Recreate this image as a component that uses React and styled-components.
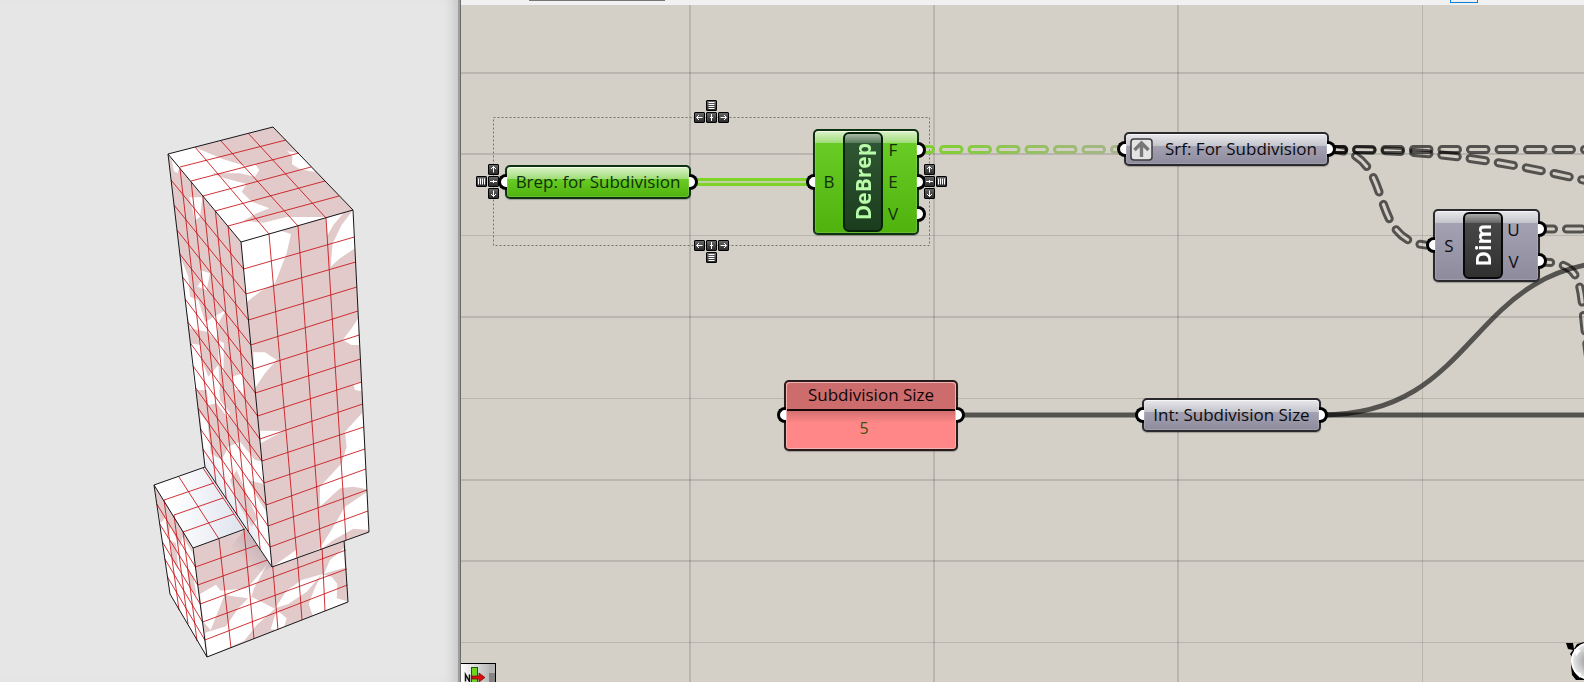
import React from "react";
import styled, { createGlobalStyle, css } from "styled-components";

const GlobalStyle = createGlobalStyle`
  * { box-sizing: border-box; }
  body { margin: 0; overflow: hidden; }
`;

const Page = styled.main`
  display: flex;
  min-height: 100vh;
  font-family: "Open Sans", "Noto Sans", sans-serif;
  background: #e6e6e6;
`;

const Viewport = styled.section`
  flex: 0 0 461px;
  border-right: 1px solid #6b6b6b;
  box-shadow: inset -2px 0 0 #9d9d9d, inset -14px 0 12px -8px #c4c4c4;
  background: #e6e6e6;
`;

const Model = styled.svg`
  display: block;
  width: 458px;
`;

const Editor = styled.section`
  flex: 1;
  min-width: 0;
  display: flex;
  flex-direction: column;
`;

const Toolbar = styled.div`
  height: 5px;
  display: flex;
  align-items: flex-start;
  justify-content: space-between;
  padding: 0 106px 0 68px;
  background: #f1f1f2;
`;

const ToolbarField = styled.div`
  width: 136px;
  height: 1px;
  background: #777;
`;

const ToolbarToggle = styled.div`
  width: 28px;
  height: 3px;
  border: 1px solid #0a7ddb;
  border-top: 0;
`;

const Canvas = styled.div`
  position: relative;
  flex: 1;
  overflow: hidden;
  background: #d4d0c8;
`;

const Drawing = styled.svg`
  position: absolute;
  inset: 0;
  width: 100%;
  height: 100%;
`;

const skins = {
  green: css`
    color: #10300a;
    border-color: #0e3210;
    background: linear-gradient(#dcf3ca, #a0dc78 12px, #69cc25 12px, #50b20d) padding-box;
  `,
  gray: css`
    color: #0c0c10;
    border-color: #2a2a2e;
    background: linear-gradient(#e8e8ec, #c4c4cc 12px, #a4a2b2 12px, #8e8c9c) padding-box;
  `,
};

const Node = styled.article`
  position: absolute;
  left: ${(p) => p.$x}px;
  top: ${(p) => p.$y}px;
  width: ${(p) => p.$w}px;
  height: ${(p) => p.$h}px;
  display: flex;
  align-items: center;
  justify-content: ${(p) => (p.$start ? "flex-start" : "center")};
  padding-left: ${(p) => (p.$start ? 4 : 0)}px;
  border: 2px solid;
  border-radius: 5px;
  font-size: 17px;
  line-height: 24px;
  white-space: nowrap;
  ${(p) => skins[p.$skin]}
  box-shadow: inset 0 1px 0 rgba(255, 255, 255, 0.6), inset 0 0 0 1px rgba(255, 255, 255, 0.15),
    0 1px 1px rgba(0, 0, 0, 0.25);
`;

const Port = styled.span`
  position: absolute;
  ${(p) => (p.$side === "left" ? "right: 100%" : "left: 100%")};
  top: ${(p) => p.$y - 10}px;
  width: 9px;
  height: 16px;
  border: 3px solid #000;
  background: #fff;
  ${(p) =>
    p.$side === "left"
      ? "border-right: 0; border-radius: 8px 0 0 8px;"
      : "border-left: 0; border-radius: 0 8px 8px 0;"}
`;

const PortColumn = styled.div`
  flex: ${(p) => (p.$side === "right" ? "1" : "0 0 28px")};
  align-self: stretch;
  display: flex;
  flex-direction: column;
  justify-content: center;
  gap: 8px;
  padding-right: ${(p) => (p.$side === "right" ? 14 : 0)}px;
  text-align: center;
`;

const Nameplate = styled.div`
  width: 40px;
  align-self: stretch;
  margin: 1px 0;
  display: flex;
  align-items: center;
  justify-content: center;
  border: 2px solid ${(p) => (p.$green ? "#06210a" : "#08080a")};
  border-radius: 6px;
  color: ${(p) => (p.$green ? "#b8fba8" : "#fff")};
  background: ${(p) =>
    p.$green
      ? "linear-gradient(#a9b9a4, #55785a 9px, #2f5633 9px, #1b3d1d)"
      : "linear-gradient(#aaa, #666 9px, #484848 9px, #303030)"};
`;

const PlateText = styled.span`
  writing-mode: vertical-rl;
  transform: rotate(180deg);
  font-size: 21px;
  font-weight: 700;
  line-height: 30px;
`;

const GraftIcon = styled.svg`
  flex: none;
  width: 23px;
  height: 23px;
  margin-right: 12px;
`;

const Panel = styled.article`
  position: absolute;
  left: 323px;
  top: 375px;
  width: 174px;
  height: 71px;
  display: flex;
  flex-direction: column;
  text-align: center;
  border: 2px solid #2a1a1a;
  border-radius: 5px;
  background: #ff8787;
  font-size: 17px;
  line-height: 24px;
  box-shadow: inset 0 0 0 1px #f0b4b4, 0 1px 1px rgba(0, 0, 0, 0.25);
`;

const PanelTitle = styled.h2`
  margin: 1px 1px 0;
  height: 28px;
  font: inherit;
  color: #100606;
  border-bottom: 2px solid #140808;
  border-radius: 4px 4px 0 0;
  background: #cd6c6c;
`;

const PanelValue = styled.div`
  margin: 0 1px 1px;
  flex: 1;
  padding: 5px 14px 0 0;
  color: #3b5212;
  font-size: 16px;
  background: linear-gradient(#d47070, #ff8787 12px);
  border-radius: 0 0 4px 4px;
`;

const AlignButton = styled.button`
  position: absolute;
  left: ${(p) => p.$x}px;
  top: ${(p) => p.$y}px;
  width: 11px;
  height: 11px;
  padding: 0;
  border: 1px solid #000;
  border-radius: 1px;
  background: linear-gradient(#666, #2b2b2b);
  svg { display: block; width: 9px; height: 9px; }
`;

const SolverBadge = styled.svg`
  position: absolute;
  left: 0;
  bottom: 0;
  width: 35px;
  height: 19px;
`;

const Compass = styled.svg`
  position: absolute;
  right: 0;
  bottom: 0;
  width: 20px;
  height: 40px;
`;

/* Linear blend between two points. */
const mix = (a, b, t) => [a[0] + (b[0] - a[0]) * t, a[1] + (b[1] - a[1]) * t];
const pts = (list) => list.map((p) => p.join(",")).join(" ");
const atY = (a, b, y) => mix(a, b, (y - a[1]) / (b[1] - a[1]));

const A = [168, 154], B = [273, 127], C = [353, 210], D = [241, 242];
const E = [205, 467], F = [272, 567], G = [369, 532];
const P = [154, 485], Q = [193, 548], R = [207, 657], S = [170, 594];
const T = [344, 495], U = [348, 602], V = [245, 529];

const rightRows = [
  [269, 237], [294, 262], [320, 287], [345, 311], [369, 335], [393, 359], [416, 382],
  [439, 404], [461, 427], [483, 449], [505, 469], [526, 490], [547, 511],
].map(([l, r]) => [atY(D, F, l), atY(C, G, r)]);
const leftYs = [180, 205, 230, 254, 277, 299, 322, 343, 366, 388, 408, 429, 449];
const leftRows = leftYs.map((y, i) => [atY(A, E, y), rightRows[i][0]]);
const leftCols = [0.164, 0.318, 0.477, 0.649, 0.823].map((t) => [mix(A, D, t), mix(E, F, t)]);
const rightCols = [
  [[269, 234], [297, 558]], [[298, 226], [321, 549]], [[326, 218], [346, 540]],
];
const roofLines = [
  [[195, 147], [269, 234]], [[221, 141], [298, 226]], [[248, 133], [326, 218]],
  [[180, 167], [286, 140]], [[191, 181], [299, 153]], [[203, 196], [311, 167]],
  [[215, 211], [325, 181]], [[228, 226], [339, 196]],
];
const baseLines = [
  ...[[504, 567], [524, 585], [542, 604], [559, 622], [577, 640]].map(([l, r]) => [atY(P, S, l), atY(Q, R, r)]),
  [[164, 500], [179, 610]], [[174, 515], [188, 624]], [[183, 532], [197, 641]],
  ...[[567, 514], [585, 532], [604, 550], [622, 569], [640, 585]].map(([l, r]) => [atY(Q, R, l), atY(T, U, r)]),
  [[219, 539], [231, 648]], [[244, 530], [254, 639]], [[269, 521], [278, 630]],
  [[294, 512], [302, 620]], [[320, 503], [325, 611]],
  [[179, 477], [219, 539]], [[164, 500], [214, 483]], [[174, 515], [223, 498]],
  [[183, 532], [234, 514]], [[203, 468], [244, 529]],
];

const Lines = ({ list }) => (
  <path
    d={list.map(([a, b]) => `M${a.join(" ")}L${b.join(" ")}`).join("")}
    stroke="#c80f14"
    strokeWidth=".85"
    fill="none"
  />
);

const PINK = "#e3caca";

function Building() {
  return (
    <Model viewBox="0 0 458 682" role="img" aria-label="Subdivided tower model">
      <defs>
        <linearGradient id="terrace" x1="0" y1="0" x2="1" y2="0">
          <stop offset=".2" stopColor="#fff" />
          <stop offset="1" stopColor="#dde2ec" />
        </linearGradient>
        <linearGradient id="contact" x1="210" y1="495" x2="236" y2="478" gradientUnits="userSpaceOnUse">
          <stop offset="0" stopColor="#ccd6e6" stopOpacity=".8" />
          <stop offset="1" stopColor="#ccd6e6" stopOpacity="0" />
        </linearGradient>
        <linearGradient id="under" x1="240" y1="560" x2="262" y2="538" gradientUnits="userSpaceOnUse">
          <stop offset="0" stopColor="#a99aa6" stopOpacity="0" />
          <stop offset="1" stopColor="#a99aa6" stopOpacity=".6" />
        </linearGradient>
      </defs>
      <polygon points={pts([P, Q, R, S])} fill="#fff" />
      <polygon points={pts([Q, T, U, R])} fill={PINK} />
      <polygon points={pts([P, E, V, Q])} fill="url(#terrace)" />
      <g transform="translate(140 380) scale(.33333)">
        <path fill={PINK} d="M43 317L128 450L155 500L158 520L128 470L120 500L92 440L82 480L78 410L62 430Z M90 480L108 490L115 570L98 540Z M140 560L160 590L170 650L150 620Z" />
        <path
          fill="#fff"
          d="M180 642L228 614L242 632L320 625L345 598L382 552L342 625L334 650L405 686L350 735L313 782L202 831L196 758L214 752L258 738L292 688L325 655L278 650L254 645L232 700L212 750L190 725Z
             M392 748L410 690L440 715L432 742L415 750Z
             M405 685L440 632L485 600L545 583L500 635L445 672Z
             M545 583L575 590L592 612L590 655L623 664L553 693L518 706L506 672L522 630Z
             M612 505L615 563L570 575L552 582L570 540Z"
        />
        <path fill={PINK} d="M254 645L320 655L292 688L258 738L214 752L236 700Z" />
      </g>
      <polygon points={pts([V, F, [262, 572], [230, 548]])} fill="url(#under)" />
      <Lines list={baseLines} />
      <path d={`M${E}L${P}L${Q}L${V}M${P}L${S}L${R}L${Q}M${R}L${U}L344 540`} stroke="#16161a" fill="none" />

      <polygon points={pts([A, B, C, G, F, E])} fill={PINK} />
      <g transform="translate(140 110) scale(.33333)" fill="#fff">
        <path d="M83 133L164 112L250 148L325 170L345 163L358 180L345 200L300 190L215 190L255 205L320 222L305 245L335 275L388 295L350 310L310 332L370 338L440 321L560 321L472 348L388 372L303 396Z M441 123L477 130L525 186L480 178L456 163L457 138Z" />
        <path d="M95 150L119 172L112 190L102 183Z M148 262L187 262L180 320L165 332L158 300Z M180 480L210 490L200 540L172 530L185 510Z M125 450L145 500L150 560L175 570L195 635L258 600L235 640L230 690L200 665L150 655L140 600Z M150 700L180 705L185 750L205 800L235 765L240 840L163 840Z M235 690L252 700L250 790L236 760Z M275 800L310 790L310 840L285 840Z" />
        <path d="M303 396L388 372L425 363L453 372L440 430L405 520L360 545L318 578Z M558 325L610 310L580 345L563 375Z M639 300L645 415L600 445L572 470L578 400L605 345Z M655 625L657 705L635 705L608 690L635 655Z M340 727L375 727L410 750L375 790L345 835Z M645 825L663 815L663 840L645 840Z" />
      </g>
      <g transform="translate(140 380) scale(.33333)" fill="#fff">
        <path d="M640 12L663 5L663 33L645 30Z M667 98L682 328L640 320L600 325L540 380L540 320L605 250L620 200L615 155Z M682 335L687 450L640 446L580 480L540 510L397 561L468 510L475 535L540 505L580 440L615 380Z M360 152L430 153L362 190Z" />
        <path d="M200 20L235 0L240 60L270 100L262 112L230 70L205 75Z M280 0L310 0L310 45Z M180 100L203 130L212 220L245 240L265 200L300 185L345 240L368 245L395 561L196 262Z" />
        <path fill={PINK} d="M270 300L290 270L322 345L352 415L335 440L300 380Z M325 300L373 312L382 400L350 350Z" />
      </g>
      <polygon points={pts([E, [208, 440], [262, 535], [255, 542]])} fill="url(#contact)" />
      <Lines list={[...rightRows, ...rightCols, ...leftRows, ...leftCols, ...roofLines]} />
      <path d={`M${A}L${B}L${C}L${D}ZM${A}L${E}L${F}L${G}L${C}M${D}L${F}`} stroke="#16161a" fill="none" />
    </Model>
  );
}

/* Wire drawn as a chain of hollow capsules. */
function ChainWire({ id, d, offset = 0, paint = "#000", opacity = 0.6 }) {
  const dash = { d, fill: "none", strokeLinecap: "round", strokeDasharray: "15.5 13", strokeDashoffset: offset };
  return (
    <>
      <mask id={id} maskUnits="userSpaceOnUse" x="0" y="0" width="1700" height="800">
        <path {...dash} stroke="#fff" strokeWidth="9" />
        <path {...dash} stroke="#000" strokeWidth="3" />
      </mask>
      <rect x="0" y="0" width="1700" height="800" fill={paint} opacity={opacity} mask={`url(#${id})`} />
    </>
  );
}

const gridX = [[690, 2], [934, 2], [1178, 2], [1422.5, 1]];
const gridY = [[73, 2], [154, 2], [235.5, 1], [317, 2], [398.5, 1], [480, 2], [561, 2], [642.5, 1]];

function Wires() {
  return (
    <Drawing aria-hidden="true">
      <defs>
        <linearGradient id="fade" gradientUnits="userSpaceOnUse" x1="926" y1="0" x2="1124" y2="0">
          <stop offset="0" stopColor="#7ed02e" />
          <stop offset="1" stopColor="#a9b48e" />
        </linearGradient>
      </defs>
      <g transform="translate(-461 -5)">
        {gridX.map(([x, w]) => <path key={x} d={`M${x} 0V2000`} stroke="#000" strokeOpacity=".12" strokeWidth={w} />)}
        {gridY.map(([y, w]) => <path key={y} d={`M461 ${y}H4000`} stroke="#000" strokeOpacity=".12" strokeWidth={w} />)}
        <rect x="493.5" y="117.5" width="436" height="128" fill="none" stroke="#77746e" strokeDasharray="2 2" />
        <path d="M691 182H813" stroke="#7ed426" strokeWidth="8" />
        <path d="M691 182H813" stroke="#c3d0a6" strokeWidth="2" />
        <ChainWire id="w1" d="M919 149.5H1124L1125 149.6" offset={4} paint="url(#fade)" opacity={1} />
        <ChainWire id="w2" d="M1329 149.5H1700" offset={1} />
        <ChainWire id="w3" d="M1329 149.5C1430 149.5 1500 160 1600 184" offset={1} />
        <ChainWire id="w4" d="M1329 149.5C1400 149.5 1362 245.5 1433 245.5" offset={1} />
        <ChainWire id="w5" d="M1540 229H1700" offset={2} />
        <ChainWire id="w6" d="M1540 262C1575 262 1580 275 1583 310C1585 335 1588 350 1590 370" offset={5} />
        <g stroke="#000" strokeOpacity=".6" strokeWidth="5" fill="none">
          <path d="M958 415H1142" />
          <path d="M1321 415H4000" />
          <path d="M1321 415C1483 415 1465 261 1627 261" />
        </g>
      </g>
    </Drawing>
  );
}

const glyphs = {
  left: "M7.5 4.5H1.5M4 2L1.5 4.5L4 7",
  right: "M1.5 4.5H7.5M5 2L7.5 4.5L5 7",
  up: "M4.5 7.5V1.5M2 4L4.5 1.5L7 4",
  down: "M4.5 1.5V7.5M2 5L4.5 7.5L7 5",
  centreH: "M4.5 1V8M3 4.5H6",
  centreV: "M1 4.5H8M4.5 3V6",
  rows: "M1.5 1.5H7.5M1.5 3.5H7.5M1.5 5.5H7.5M1.5 7.5H7.5",
  columns: "M1.5 1.5V7.5M3.5 1.5V7.5M5.5 1.5V7.5M7.5 1.5V7.5",
};

const alignButtons = [
  ["rows", 245, 95, "Distribute vertically"],
  ["left", 233, 107, "Align left"],
  ["centreH", 245, 107, "Align centre"],
  ["right", 257, 107, "Align right"],
  ["left", 233, 235, "Align left, bottom bar"],
  ["centreH", 245, 235, "Align centre, bottom bar"],
  ["right", 257, 235, "Align right, bottom bar"],
  ["rows", 245, 247, "Distribute vertically, bottom bar"],
  ["up", 27, 159, "Align top"],
  ["centreV", 27, 171, "Align middle"],
  ["down", 27, 183, "Align bottom"],
  ["columns", 15, 171, "Distribute horizontally"],
  ["up", 463, 159, "Align top, right bar"],
  ["centreV", 463, 171, "Align middle, right bar"],
  ["down", 463, 183, "Align bottom, right bar"],
  ["columns", 475, 171, "Distribute horizontally, right bar"],
];

export default function App() {
  return (
    <Page>
      <GlobalStyle />
      <Viewport>
        <Building />
      </Viewport>
      <Editor>
        <Toolbar>
          <ToolbarField />
          <ToolbarToggle />
        </Toolbar>
        <Canvas>
          <Wires />
          <Node $skin="green" $x={44} $y={160} $w={186} $h={34}>
            <Port $side="left" $y={17} />
            Brep: for Subdivision
            <Port $side="right" $y={17} />
          </Node>
          <Node $skin="green" $x={352} $y={124} $w={106} $h={106}>
            <Port $side="left" $y={53} />
            <PortColumn>B</PortColumn>
            <Nameplate $green><PlateText>DeBrep</PlateText></Nameplate>
            <PortColumn $side="right"><span>F</span><span>E</span><span>V</span></PortColumn>
            <Port $side="right" $y={21} />
            <Port $side="right" $y={53} />
            <Port $side="right" $y={85} />
          </Node>
          <Node $skin="gray" $start $x={663} $y={127} $w={205} $h={34}>
            <Port $side="left" $y={17} />
            <GraftIcon viewBox="0 0 23 23" aria-hidden="true">
              <rect x="1" y="1" width="21" height="21" rx="3" fill="#e4e4e4" stroke="#3c3c3c" strokeWidth="1.5" />
              <path d="M11.5 19V6M4.5 12L11.5 5L18.5 12" stroke="#777" strokeWidth="3.4" fill="none" />
            </GraftIcon>
            Srf: For Subdivision
            <Port $side="right" $y={17} />
          </Node>
          <Node $skin="gray" $x={972} $y={204} $w={107} $h={73}>
            <Port $side="left" $y={36} />
            <PortColumn>S</PortColumn>
            <Nameplate><PlateText>Dim</PlateText></Nameplate>
            <PortColumn $side="right"><span>U</span><span>V</span></PortColumn>
            <Port $side="right" $y={20} />
            <Port $side="right" $y={52} />
          </Node>
          <Panel>
            <Port $side="left" $y={35} />
            <PanelTitle>Subdivision Size</PanelTitle>
            <PanelValue>5</PanelValue>
            <Port $side="right" $y={35} />
          </Panel>
          <Node $skin="gray" $x={681} $y={393} $w={179} $h={34}>
            <Port $side="left" $y={17} />
            Int: Subdivision Size
            <Port $side="right" $y={17} />
          </Node>
          {alignButtons.map(([glyph, x, y, label]) => (
            <AlignButton key={label} $x={x} $y={y} aria-label={label}>
              <svg viewBox="0 0 9 9"><path d={glyphs[glyph]} stroke="#fff" fill="none" /></svg>
            </AlignButton>
          ))}
          <SolverBadge viewBox="0 0 35 19" aria-hidden="true">
            <defs>
              <linearGradient id="badge"><stop offset="0" stopColor="#fff" /><stop offset="1" stopColor="#bbb" /></linearGradient>
            </defs>
            <rect width="35" height="19" fill="#000" />
            <rect y="1" width="28" height="18" fill="url(#badge)" />
            <rect x="28" y="1" width="6" height="9" fill="#b4b4b4" />
            <rect x="28" y="10" width="6" height="9" fill="#858585" />
            <rect x="10.5" y="4.5" width="6" height="16" fill="#6fd321" stroke="#1d5a08" />
            <path d="M11 13H18V10L24 14.5L18 19V16H11Z" fill="#d80f0f" stroke="#7a0808" strokeWidth=".7" />
            <path d="M4.5 18.5V11.5L8.5 18.5V11.5" stroke="#111" strokeWidth="1.5" fill="none" />
          </SolverBadge>
          <Compass viewBox="0 0 20 40" aria-hidden="true">
            <defs>
              <radialGradient id="dial"><stop offset=".3" stopColor="#a9a9a9" /><stop offset="1" stopColor="#ededed" /></radialGradient>
            </defs>
            <path d="M2 1H9L10 7L13 2L20 0V38L12 38L8 33L7 24L8 15L6 12L9 8L4 7Z" fill="#000" />
            <circle cx="26" cy="19" r="18" fill="url(#dial)" stroke="#fff" strokeWidth="2" />
            <path d="M10 7L17 8L12 14Z M10 29L17 31L16 36Z" fill="#fff" />
          </Compass>
        </Canvas>
      </Editor>
    </Page>
  );
}
